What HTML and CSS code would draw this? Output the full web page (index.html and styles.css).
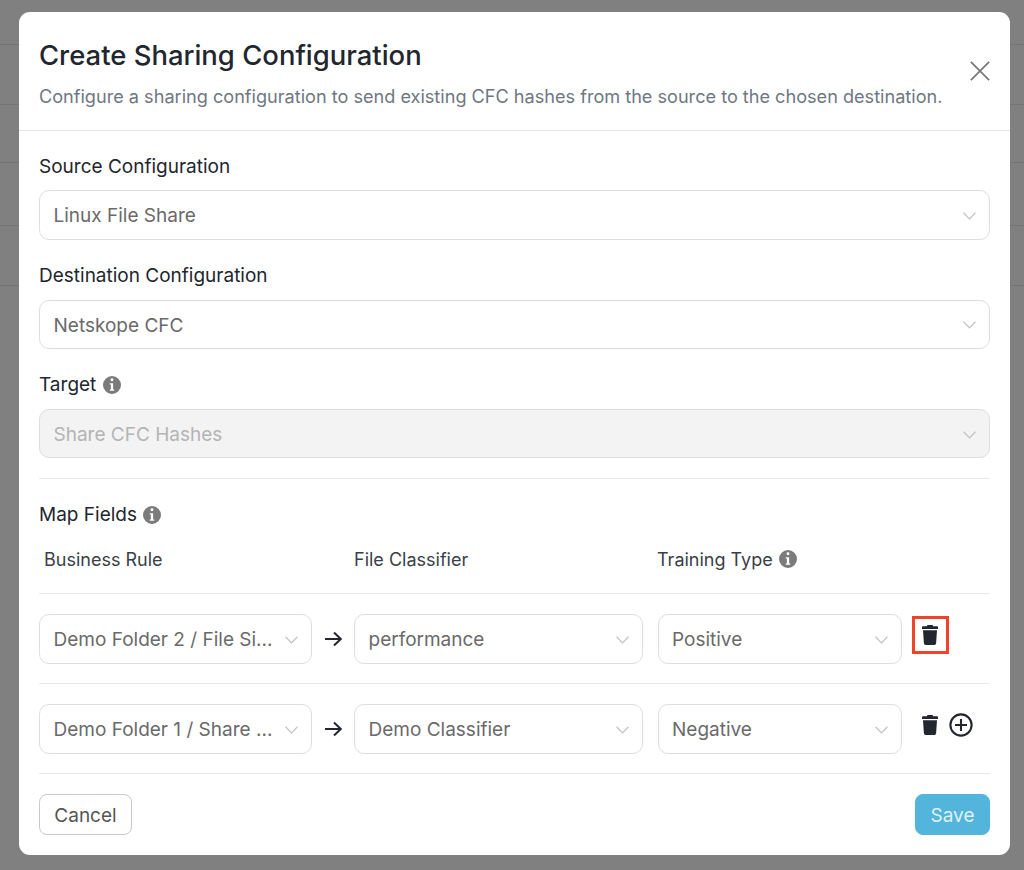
FILE: index.html
```html
<!DOCTYPE html>
<html>
<head>
	<meta charset="UTF-8">
	<title>Create Sharing Configuration</title>
	<link rel="stylesheet" href="styles.css">
</head>
<body>
	<div class="page">
		<div class="page-row row-a"></div>
		<div class="page-row row-b"></div>
		<div class="page-row row-c"></div>
		<div class="page-row row-d"></div>
		<div class="page-row row-e"></div>
	</div>
	<div class="overlay">
		<div class="modal">
			<div class="modal-header">
				<div>
					<h1 class="modal-title">Create Sharing Configuration</h1>
					<p class="modal-sub">Configure a sharing configuration to send existing CFC hashes from the source to the chosen destination.</p>
				</div>
				<svg class="close" viewBox="0 0 22 22"><path d="M1 1L21 21M21 1L1 21"/></svg>
			</div>
			<div class="modal-body">
				<div class="field">
					<div class="label">Source Configuration</div>
					<div class="select"><span class="value">Linux File Share</span><svg class="chev" viewBox="0 0 12 7"><path d="M.5.5L6 6.2L11.5.5"/></svg></div>
				</div>
				<div class="field">
					<div class="label">Destination Configuration</div>
					<div class="select"><span class="value">Netskope CFC</span><svg class="chev" viewBox="0 0 12 7"><path d="M.5.5L6 6.2L11.5.5"/></svg></div>
				</div>
				<div class="field field-target">
					<div class="label gap-target">Target <svg class="info" viewBox="0 0 16 16"><use href="#i-info"/></svg></div>
					<div class="select disabled"><span class="value">Share CFC Hashes</span><svg class="chev" viewBox="0 0 12 7"><path d="M.5.5L6 6.2L11.5.5"/></svg></div>
				</div>
				<hr class="line line-target">
				<div class="label map-title">Map Fields <svg class="info" viewBox="0 0 16 16"><use href="#i-info"/></svg></div>
				<div class="map-head">
					<div class="col-rule">Business Rule</div>
					<div class="col-file">File Classifier</div>
					<div class="col-type">Training Type <svg class="info" viewBox="0 0 16 16"><use href="#i-info"/></svg></div>
				</div>
				<hr class="line">
				<div class="map-row">
					<div class="select col-rule"><span class="value">Demo Folder 2 / File Si...</span><svg class="chev" viewBox="0 0 12 7"><path d="M.5.5L6 6.2L11.5.5"/></svg></div>
					<svg class="arrow" viewBox="0 0 18 16"><path d="M1 8H16.5M10 1.5L16.8 8L10 14.5"/></svg>
					<div class="select col-file"><span class="value">performance</span><svg class="chev" viewBox="0 0 12 7"><path d="M.5.5L6 6.2L11.5.5"/></svg></div>
					<div class="select col-type"><span class="value">Positive</span><svg class="chev" viewBox="0 0 12 7"><path d="M.5.5L6 6.2L11.5.5"/></svg></div>
					<div class="actions">
						<span class="highlight"><svg class="trash" viewBox="0 0 16 20"><use href="#i-trash"/></svg></span>
					</div>
				</div>
				<hr class="line">
				<div class="map-row">
					<div class="select col-rule"><span class="value">Demo Folder 1 / Share ...</span><svg class="chev" viewBox="0 0 12 7"><path d="M.5.5L6 6.2L11.5.5"/></svg></div>
					<svg class="arrow" viewBox="0 0 18 16"><path d="M1 8H16.5M10 1.5L16.8 8L10 14.5"/></svg>
					<div class="select col-file"><span class="value">Demo Classifier</span><svg class="chev" viewBox="0 0 12 7"><path d="M.5.5L6 6.2L11.5.5"/></svg></div>
					<div class="select col-type"><span class="value">Negative</span><svg class="chev" viewBox="0 0 12 7"><path d="M.5.5L6 6.2L11.5.5"/></svg></div>
					<div class="actions">
						<span class="action-slot"><svg class="trash" viewBox="0 0 16 20"><use href="#i-trash"/></svg></span>
						<svg class="plus" viewBox="0 0 24 24"><circle cx="12" cy="12" r="10.6"/><path d="M12 6V18M6 12H18"/></svg>
					</div>
				</div>
				<hr class="line">
				<div class="footer">
					<button class="btn btn-cancel">Cancel</button>
					<button class="btn btn-save">Save</button>
				</div>
			</div>
		</div>
	</div>
	<svg class="defs" width="0" height="0">
		<symbol id="i-info" viewBox="0 0 16 16">
			<path fill-rule="evenodd" fill="#7b7b7b" d="M8 0a8 8 0 1 1 0 16A8 8 0 0 1 8 0zM6.700 3.400a1.300 1.300 0 1 0 2.600 0a1.300 1.300 0 0 0-2.600 0zM6 6.400v1.200h1V12H6v1.200h4V12H9V6.400z"/>
		</symbol>
		<symbol id="i-trash" viewBox="0 0 16 20">
			<path fill="#22262e" d="M5.500 0h5l.7 1.300H15a1 1 0 0 1 1 1V4H0V2.300a1 1 0 0 1 1-1h3.800zM1 5.300h14l-.9 13a1.800 1.800 0 0 1-1.800 1.700H3.700a1.800 1.800 0 0 1-1.800-1.700z"/>
		</symbol>
	</svg>
</body>
</html>
```
FILE: styles.css
```css
*{margin:0;padding:0;box-sizing:border-box;}
html,body{height:100%;overflow:hidden;}
body{
	background:#808080;
	font-family:Inter,"Liberation Sans",sans-serif;
	font-size:19px;
	color:#22262e;
}
.page-row{border-bottom:1px solid #747474;}
.row-a{height:45px;}
.row-b{height:60px;}
.row-c{height:58px;}
.row-d{height:63px;}
.row-e{height:60px;}
.defs{position:absolute;}

.overlay{
	position:fixed;
	top:0;
	left:0;
	right:0;
	bottom:0;
	padding:12px 14px 15px 19px;
}
.modal{
	height:843px;
	background:#fff;
	border-radius:11px;
}
.modal-header{
	height:119px;
	padding:25px 20px 0;
	border-bottom:1px solid #e5e5e5;
	display:flex;
	justify-content:space-between;
}
.modal-title{
	font-size:27.45px;
	line-height:36px;
	font-weight:500;
	color:#22262e;
}
.modal-sub{
	margin-top:11px;
	font-size:18.12px;
	line-height:24px;
	color:#6f7782;
	white-space:nowrap;
}
.close{
	width:20px;
	height:20px;
	margin-top:24px;
	flex:none;
}
.close path{fill:none;stroke:#7b7b7b;stroke-width:2;}

.modal-body{padding:20.5px 20px 0;}
.field + .field{margin-top:21.5px;}
.field + .field-target{margin-top:21px;}
.label{
	height:30px;
	line-height:30px;
	margin-bottom:8.5px;
	display:flex;
	align-items:center;
	gap:6px;
}
.gap-target{gap:7px;margin-bottom:9px;}
.info{width:18px;height:18px;flex:none;}
.select{
	height:49.5px;
	padding:2px 13px 0 13.5px;
	background:#fff;
	border:1px solid #dedede;
	border-radius:10px;
	display:flex;
	align-items:center;
	justify-content:space-between;
	color:#6a6a6a;
}
.value{white-space:nowrap;}
.chev{width:13px;height:8px;flex:none;}
.chev path{fill:none;stroke:#c2c2c2;stroke-width:1.1;}
.select.disabled{
	height:49px;
	background:#f3f3f3;
	color:#b4b4b4;
}
.line{
	border:0;
	border-top:1px solid #e8e8e8;
}
.line-target{margin-top:20px;}
.map-title{margin:21px 0 0;}
.map-head{
	display:flex;
	align-items:center;
	height:36px;
	margin:11px 0 16px;
	font-size:18px;
	color:#3a3f47;
}
.map-head > .col-rule{width:315px;padding-left:5px;}
.map-head > .col-file{width:303px;}
.map-head > .col-type{display:flex;align-items:center;gap:6px;}
.map-row{
	height:89px;
	padding-top:20px;
	display:flex;
	align-items:flex-start;
}
.map-row .col-rule{width:273px;}
.map-row .col-file{width:289px;margin-right:15px;}
.map-row .col-type{width:244px;padding-left:13px;}
.arrow{
	width:18px;
	height:16px;
	margin:17px 12px 0;
	flex:none;
}
.arrow path{fill:none;stroke:#22262e;stroke-width:2;}
.actions{
	display:flex;
	align-items:center;
	margin-left:10px;
}
.highlight{
	width:37px;
	height:38px;
	margin-top:2px;
	border:3px solid #f0432a;
	display:flex;
	align-items:center;
	justify-content:center;
}
.action-slot{
	width:37px;
	height:38px;
	margin-top:2px;
	display:flex;
	align-items:center;
	justify-content:center;
}
.trash{width:16px;height:20px;margin-right:1px;}
.plus{width:24px;height:24px;margin-top:2px;}
.plus circle,.plus path{fill:none;stroke:#22262e;stroke-width:2.1;}
.footer{
	display:flex;
	justify-content:space-between;
	padding-top:20px;
}
.btn{
	height:41px;
	padding-top:2px;
	border-radius:8px;
	font-family:inherit;
	font-size:19px;
}
.btn-cancel{
	width:93px;
	background:#fff;
	border:1px solid #c9c9c9;
	color:#555;
}
.btn-save{
	width:75px;
	background:#53b4dc;
	border:1px solid #53b4dc;
	color:#dff1f8;
}
```
